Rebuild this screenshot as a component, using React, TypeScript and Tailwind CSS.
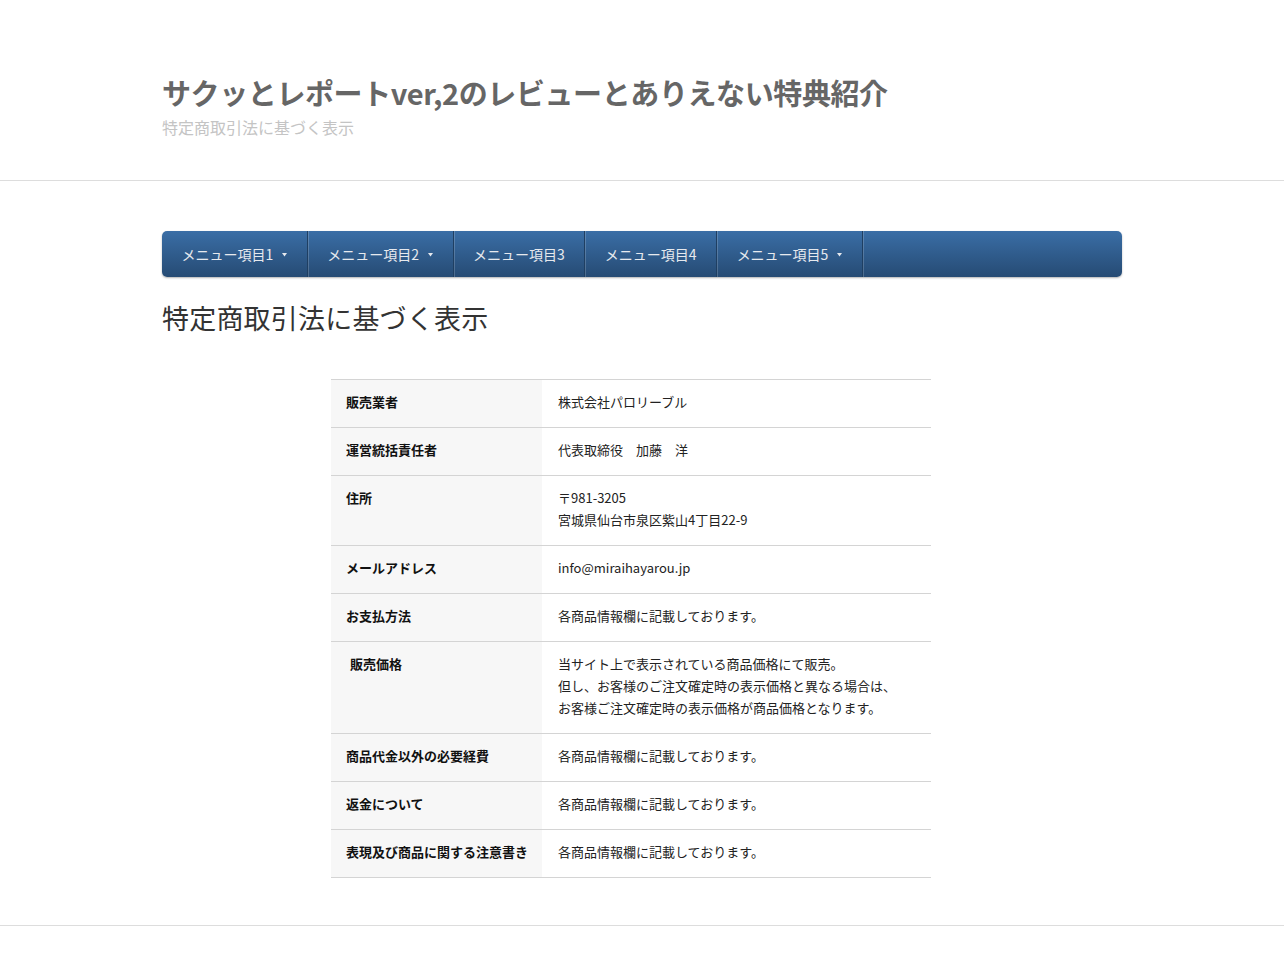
import React from "react";

const rows: { label: string; value: string[]; indent?: boolean }[] = [
  { label: "販売業者", value: ["株式会社パロリーブル"] },
  { label: "運営統括責任者", value: ["代表取締役　加藤　洋"] },
  { label: "住所", value: ["〒981-3205", "宮城県仙台市泉区紫山4丁目22-9"] },
  { label: "メールアドレス", value: ["info@miraihayarou.jp"] },
  { label: "お支払方法", value: ["各商品情報欄に記載しております。"] },
  {
    label: "販売価格",
    indent: true,
    value: [
      "当サイト上で表示されている商品価格にて販売。",
      "但し、お客様のご注文確定時の表示価格と異なる場合は、",
      "お客様ご注文確定時の表示価格が商品価格となります。",
    ],
  },
  { label: "商品代金以外の必要経費", value: ["各商品情報欄に記載しております。"] },
  { label: "返金について", value: ["各商品情報欄に記載しております。"] },
  { label: "表現及び商品に関する注意書き", value: ["各商品情報欄に記載しております。"] },
];

const menu = [
  { t: "メニュー項目1", arrow: true },
  { t: "メニュー項目2", arrow: true },
  { t: "メニュー項目3", arrow: false },
  { t: "メニュー項目4", arrow: false },
  { t: "メニュー項目5", arrow: true },
];

export default function App() {
  return (
    <div
      className="min-h-screen bg-white text-[#333]"
      style={{ fontFamily: '"Noto Sans CJK JP", "Noto Sans", sans-serif' }}
    >
      <header className="border-b border-[#dddddd] pt-[74px] pb-[41px]">
        <div className="mx-auto w-[960px]">
          <h1 className="text-[29px] font-bold leading-[36px] text-[#666666] tracking-[-0.4px]">
            サクッとレポートver,2のレビューとありえない特典紹介
          </h1>
          <p className="mt-[5px] text-[16px] leading-[24px] text-[#c4c4c4]">
            特定商取引法に基づく表示
          </p>
        </div>
      </header>

      <main className="mx-auto w-[960px] pt-[50px] pb-[47px]">
        <nav className="flex h-[46px] rounded-[5px] bg-gradient-to-b from-[#3a6ea6] to-[#264b74] shadow-[0_1px_2px_rgba(0,0,0,0.3)]">
          {menu.map((m, i) => (
            <div
              key={i}
              className="flex items-center gap-[9px] border-r border-r-[#1f3f62] shadow-[1px_0_0_rgba(255,255,255,0.18)] px-[19.5px] text-[14px] text-[#e6e9ee]"
            >
              <span>{m.t}</span>
              {m.arrow && (
                <svg width="5" height="4" viewBox="0 0 5 4" className="mt-[1px]">
                  <path d="M0 0 L5 0 L2.5 3.5 Z" fill="#e6e9ee" />
                </svg>
              )}
            </div>
          ))}
        </nav>

        <h2 className="mt-[21px] text-[27px] leading-[40px] font-normal tracking-[0.2px] text-[#333]">
          特定商取引法に基づく表示
        </h2>

        <div className="mt-[41px] pl-[169px]">
          <table className="w-[600px] border-collapse text-[13px] leading-[22px]">
            <tbody>
              {rows.map((r, i) => (
                <tr key={i} className="border-y border-[#d4d4d4]">
                  <th
                    className={`w-[211px] bg-[#f7f7f7] pt-[11px] pb-[14px] pr-[10px] text-left align-top font-bold text-[#111] ${
                      r.indent ? "pl-[19px]" : "pl-[15px]"
                    }`}
                  >
                    {r.label}
                  </th>
                  <td className="pt-[11px] pb-[14px] pl-[16px] pr-[10px] align-top text-[#222]">
                    {r.value.map((v, j) => (
                      <div key={j}>{v}</div>
                    ))}
                  </td>
                </tr>
              ))}
            </tbody>
          </table>
        </div>
      </main>
      <div className="border-t border-[#dddddd] h-[36px]" />
    </div>
  );
}
